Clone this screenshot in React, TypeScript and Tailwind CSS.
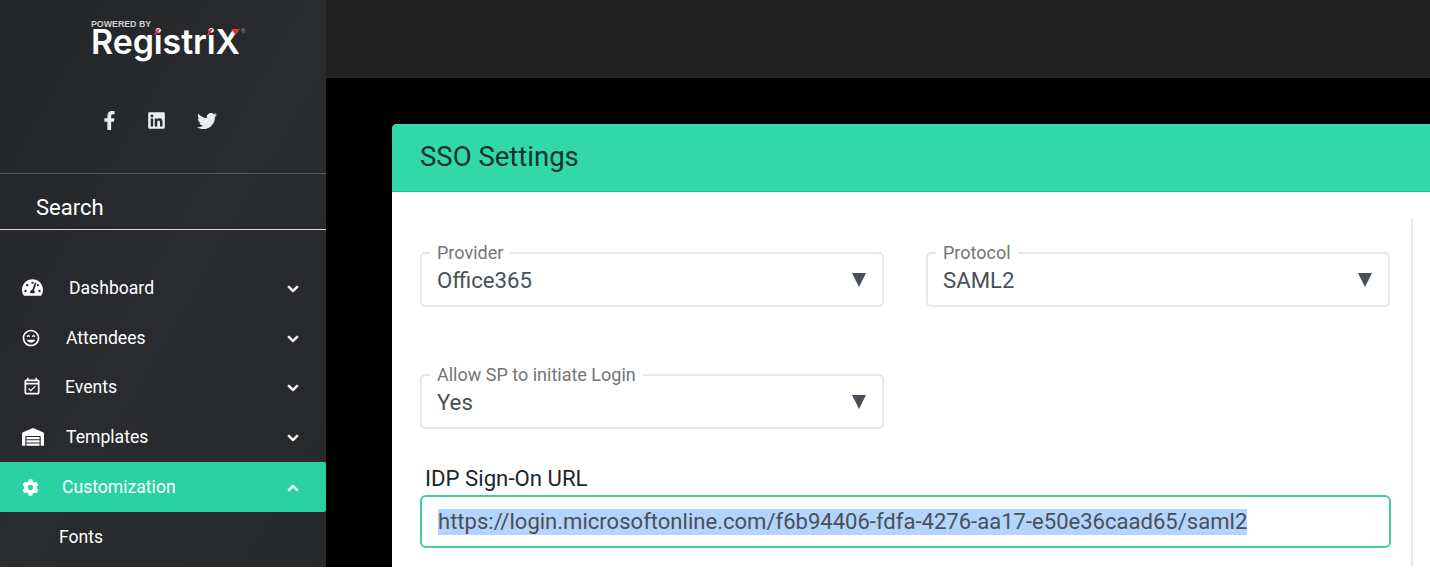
import React from "react";
import { FaFacebookF, FaLinkedin, FaTwitter, FaTachometerAlt, FaCog, FaChevronDown, FaChevronUp, FaWarehouse } from "react-icons/fa";
import { MdOutlineEventAvailable, MdOutlineSentimentVerySatisfied } from "react-icons/md";

const rows = [
  { label: "Dashboard", Icon: FaTachometerAlt, size: 21, icon: "w-[47px]", active: false },
  { label: "Attendees", Icon: MdOutlineSentimentVerySatisfied, size: 20, icon: "w-[45px] -ml-[1px]", active: false },
  { label: "Events", Icon: MdOutlineEventAvailable, size: 20, icon: "w-[43px]", active: false },
  { label: "Templates", Icon: FaWarehouse, size: 22, icon: "w-[44px]", active: false },
  { label: "Customization", Icon: FaCog, size: 17, icon: "w-[40px]", active: true },
];

function Row({ r }: { r: (typeof rows)[number] }) {
  const Chev = r.active ? FaChevronUp : FaChevronDown;
  return (
    <div className={`flex h-[49.8px] items-center pl-[22px] pr-[27px] text-[17.6px] text-white ${r.active ? "rounded-r-[2px] bg-[#2bd1a2]" : ""}`}>
      <span className={`${r.icon} flex shrink-0 items-center`}><r.Icon size={r.size} /></span>
      <span className="flex-1">{r.label}</span>
      <Chev size={12} className="translate-y-[1px] stroke-[30]" />
    </div>
  );
}

function Select({ label, value }: { label: string; value: string }) {
  return (
    <fieldset className="h-[63px] rounded-[5px] border-2 border-[#e6e7e8] pl-[15px] pr-[16px]">
      <legend className="-ml-[7px] px-[7px] text-[18px] leading-[18px] text-[#757575]">{label}</legend>
      <div className="flex items-center justify-between pt-[3px]">
        <span className="text-[22.2px] leading-[30px] text-[#495057]">{value}</span>
        <svg width="14" height="14" viewBox="0 0 14 14" className="fill-[#495057]"><path d="M0 0h14L7 14z" /></svg>
      </div>
    </fieldset>
  );
}

export default function App() {
  return (
    <div className="flex h-[567px] w-[1430px] overflow-hidden bg-black font-['Roboto',sans-serif]">
      <aside className="flex w-[326px] shrink-0 flex-col bg-gradient-to-br from-[#242527] via-[#292b2e] to-[#27282a] text-white">
        <div className="flex h-[85px] flex-col items-center pt-[20px]">
          <div className="relative ml-[6px] w-[150px]">
            <div className="font-['Liberation_Sans',sans-serif] text-[8.8px] font-bold leading-[9px] text-[#d0d0d0]">POWERED BY</div>
            <div className="font-['Inter',sans-serif] text-[34px] font-semibold leading-[26px] tracking-[-0.1px]">RegistriX</div>
            <svg width="9" height="6" viewBox="0 0 9 6" className="absolute left-[140px] top-[9px] fill-[#e0313f]"><path d="M0 0h9L4.5 6z" /></svg>
            <svg width="6" height="6" viewBox="0 0 6 6" className="absolute left-[63px] top-[9px] fill-[#e0313f]"><path d="M3 0h3L2 6H0z" /></svg>
            <svg width="6" height="6" viewBox="0 0 6 6" className="absolute left-[116px] top-[9px] fill-[#e0313f]"><path d="M3 0h3L2 6H0z" /></svg>
            <span className="absolute left-[150px] top-[8px] text-[6px] leading-[6px] text-[#999999]">®</span>
          </div>
        </div>
        <div className="flex h-[88px] items-start justify-center pr-[10px] pt-[26px] text-[#e8eeee]">
          <FaFacebookF size={19} className="mr-[28px]" />
          <FaLinkedin size={19} className="mr-[31px]" />
          <FaTwitter size={20} />
        </div>
        <div className="h-[57px] border-y border-t-[#55575a] border-b-[#d8d8d8] pl-[36px] text-[22px] leading-[67px]">Search</div>
        <nav className="mt-[33px] flex flex-col">
          {rows.map((r) => <Row key={r.label} r={r} />)}
          <div className="pl-[59px] pt-[13px] text-[17.6px] leading-[24px]">Fonts</div>
        </nav>
      </aside>
      <main className="flex min-w-0 flex-1 flex-col">
        <div className="h-[78px] shrink-0 bg-[#222222]" />
        <div className="flex-1 pl-[66px] pt-[46px]">
          <section className="h-full rounded-tl-[5px] bg-white">
            <h1 className="h-[68px] rounded-tl-[5px] border-b border-[#2cb892] bg-[#32d8a9] pl-[28px] text-[27.5px] font-normal leading-[66px] text-[#17332f]">SSO Settings</h1>
            <div className="ml-[28px] mr-[17px] mt-[27px] h-full border-r-2 border-[#e8e8e8] pr-[20px]">
              <div className="grid grid-cols-[464px_464px] gap-x-[42px] pt-[25px]">
                <Select label="Provider" value="Office365" />
                <Select label="Protocol" value="SAML2" />
              </div>
              <div className="grid grid-cols-[464px_464px] gap-x-[42px] pt-[59px]">
                <Select label="Allow SP to initiate Login" value="Yes" />
              </div>
              <div className="pl-[5px] pt-[35px] text-[22.2px] leading-[28px] text-[#212529]">IDP Sign-On URL</div>
              <div className="mt-[3px] flex h-[53px] items-center rounded-[6px] border-2 border-[#46c9a0] pl-[16px] text-[22.05px] text-[#495057]">
                <span className="bg-[#b3d4fc] leading-[26px]">https://login.microsoftonline.com/f6b94406-fdfa-4276-aa17-e50e36caad65/saml2</span>
              </div>
            </div>
          </section>
        </div>
      </main>
    </div>
  );
}
